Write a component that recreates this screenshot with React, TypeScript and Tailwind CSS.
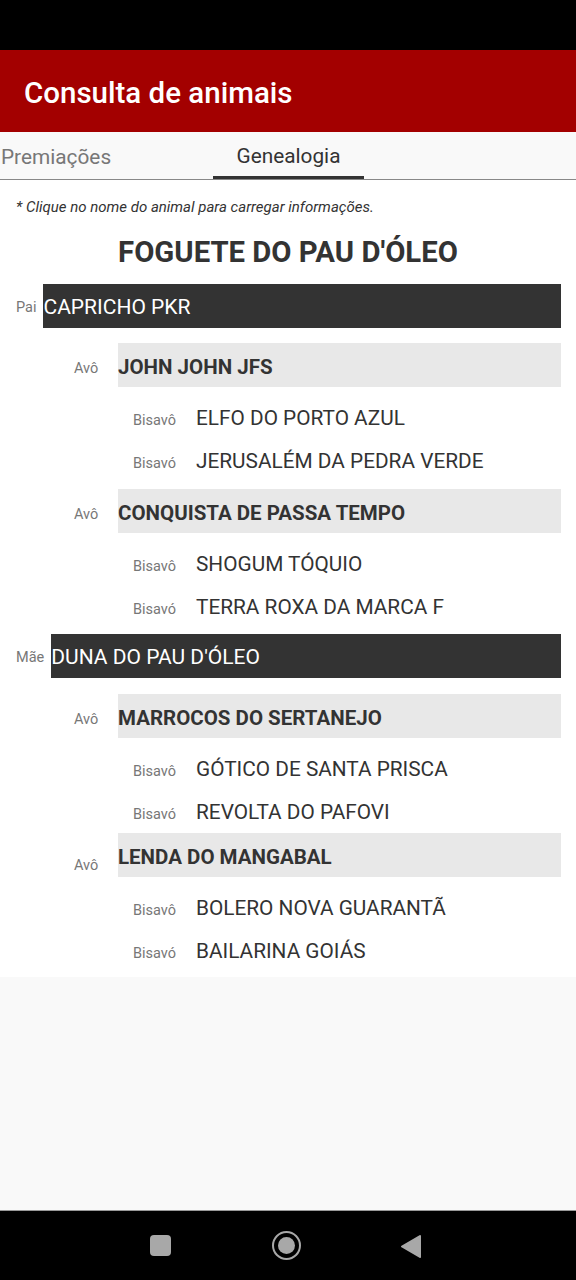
import React from "react";

type Bis = { label: string; name: string };
type Avo = { name: string; bis: Bis[]; labelOffset?: string; mt: string };

const Bar = ({ label, name }: { label: string; name: string }) => (
  <div className="flex items-center pl-4 pr-[15px]">
    <span className="text-[14.5px] text-[#777] mr-[7px] mt-[3px]">{label}</span>
    <div className="flex-1 h-[44px] bg-[#333333] flex items-center pt-[3px] text-white text-[21px]">
      {name}
    </div>
  </div>
);

const AvoBlock = ({ a }: { a: Avo }) => (
  <div className={`flex flex-col ${a.mt}`}>
    <div className="flex items-center pl-[74px] pr-[15px]">
      <span className={`w-[44px] text-[14.5px] text-[#777] ${a.labelOffset ?? "mt-[6px]"}`}>Avô</span>
      <div className="flex-1 h-[44px] bg-[#e8e8e8] flex items-center pt-[3px] text-[#333] text-[20.5px] font-bold">
        {a.name}
      </div>
    </div>
    <div className="flex flex-col pt-[9px]">
      {a.bis.map((b) => (
        <div key={b.name} className="flex items-center h-[43px] pl-[133px] pt-[1px]">
          <span className="w-[63px] text-[14.5px] text-[#777] pt-[4px]">{b.label}</span>
          <span className="text-[20.8px] text-[#333]">{b.name}</span>
        </div>
      ))}
    </div>
  </div>
);

export default function App() {
  const paiAvos: Avo[] = [
    {
      name: "JOHN JOHN JFS",
      mt: "mt-[15px]",
      bis: [
        { label: "Bisavô", name: "ELFO DO PORTO AZUL" },
        { label: "Bisavó", name: "JERUSALÉM DA PEDRA VERDE" },
      ],
    },
    {
      name: "CONQUISTA DE PASSA TEMPO",
      mt: "mt-[7px]",
      bis: [
        { label: "Bisavô", name: "SHOGUM TÓQUIO" },
        { label: "Bisavó", name: "TERRA ROXA DA MARCA F" },
      ],
    },
  ];
  const maeAvos: Avo[] = [
    {
      name: "MARROCOS DO SERTANEJO",
      mt: "mt-[16px]",
      bis: [
        { label: "Bisavô", name: "GÓTICO DE SANTA PRISCA" },
        { label: "Bisavó", name: "REVOLTA DO PAFOVI" },
      ],
    },
    {
      name: "LENDA DO MANGABAL",
      mt: "mt-0",
      labelOffset: "mt-[20px]",
      bis: [
        { label: "Bisavô", name: "BOLERO NOVA GUARANTÃ" },
        { label: "Bisavó", name: "BAILARINA GOIÁS" },
      ],
    },
  ];

  return (
    <div
      className="w-[576px] h-[1280px] flex flex-col bg-[#f9f9f9] overflow-hidden"
      style={{ fontFamily: "Roboto, 'Noto Sans', sans-serif" }}
    >
      <div className="h-[50px] bg-black shrink-0" />
      <div className="h-[82px] bg-[#a30000] flex items-center pl-6 pt-[4px] shrink-0">
        <span className="text-white text-[29.5px] font-medium">Consulta de animais</span>
      </div>
      <div className="h-[48px] bg-[#f9f9f9] border-b border-[#888] flex items-stretch relative shrink-0">
        <div className="absolute left-[1px] top-[2px] h-full flex items-center text-[20.8px] text-[#777]">
          Premiações
        </div>
        <div className="absolute left-[213px] w-[151px] top-0 h-full pt-[6px] flex items-center justify-center text-[20.8px] text-[#333] border-b-[3px] border-[#333]">
          Genealogia
        </div>
      </div>
      <div className="bg-white flex flex-col pb-[5px]">
        <div className="pl-4 pt-[16px] text-[15px] italic text-[#333]">
          * Clique no nome do animal para carregar informações.
        </div>
        <div className="text-center text-[29.3px] font-bold text-[#333] mt-[12px] mb-[10px]">
          FOGUETE DO PAU D'ÓLEO
        </div>
        <Bar label="Pai" name="CAPRICHO PKR" />
        {paiAvos.map((a) => (
          <AvoBlock key={a.name} a={a} />
        ))}
        <div className="mt-[6px]">
          <Bar label="Mãe" name="DUNA DO PAU D'ÓLEO" />
        </div>
        {maeAvos.map((a) => (
          <AvoBlock key={a.name} a={a} />
        ))}
      </div>
      <div className="flex-1" />
      <div className="h-[70px] bg-black border-t border-[#999] flex items-center justify-center shrink-0 relative">
        <div className="absolute left-[150px] top-[24px] w-[21px] h-[21px] rounded-[4px] bg-[#a8a8a8]" />
        <div className="absolute left-[272px] top-[20px] w-[29px] h-[29px] rounded-full border-[2px] border-[#a8a8a8] flex items-center justify-center">
          <div className="w-[17px] h-[17px] rounded-full bg-[#a8a8a8]" />
        </div>
        <svg className="absolute left-[400px] top-[23px]" width="22" height="25" viewBox="0 0 22 25">
          <path d="M20 2 L2 12.5 L20 23 Z" fill="#a8a8a8" stroke="#a8a8a8" strokeWidth="2" strokeLinejoin="round" />
        </svg>
      </div>
    </div>
  );
}
